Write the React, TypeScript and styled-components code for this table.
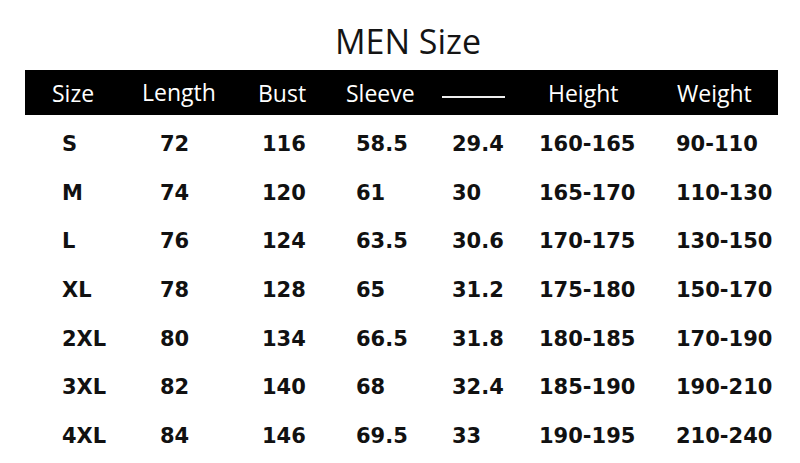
import React from "react";
import styled, { createGlobalStyle } from "styled-components";

const Global = createGlobalStyle`
  html, body { margin: 0; padding: 0; background: #fff; }
  body { width: 800px; height: 463px; overflow: hidden; }
`;

const Page = styled.div`
  width: 800px;
  height: 463px;
  background: #fff;
  display: flex;
  flex-direction: column;
`;

const Title = styled.h1`
  margin: 0;
  padding-top: 24px;
  font-family: "Open Sans", "Noto Sans", sans-serif;
  font-weight: 400;
  font-size: 34px;
  line-height: 34px;
  color: #141414;
  text-align: center;
  padding-left: 16px;
`;

const HeaderBar = styled.div`
  margin: 12px 22px 0 25px;
  height: 45px;
  box-sizing: border-box;
  padding: 2px 0 0 27px;
  background: #000;
  display: grid;
  grid-template-columns: 90px 116px 88px 96px 106px 129px 1fr;
  align-items: center;
  font-family: "Open Sans", "Noto Sans", sans-serif;
  font-size: 23px;
  line-height: 43px;
  color: #fff;
`;

const HeadCell = styled.div<{ $lift?: number }>`
  white-space: nowrap;
  transform: translateY(${(p) => -(p.$lift ?? 0)}px);
`;

const Rule = styled.span`
  display: block;
  width: 63px;
  height: 2px;
  margin-top: 6px;
  background: #eee;
`;

const Body = styled.div`
  margin-top: 5px;
  padding-left: 62px;
  display: flex;
  flex-direction: column;
`;

const Row = styled.div`
  display: grid;
  grid-template-columns: 98px 102px 94px 96px 87px 137px 1fr;
  height: 48.67px;
  font-family: "DejaVu Sans", "Noto Sans", sans-serif;
  font-weight: 700;
  font-size: 21px;
  line-height: 48.67px;
  color: #111;
`;

const Cell = styled.div`
  white-space: nowrap;
`;

const rows = [
  ["S", "72", "116", "58.5", "29.4", "160-165", "90-110"],
  ["M", "74", "120", "61", "30", "165-170", "110-130"],
  ["L", "76", "124", "63.5", "30.6", "170-175", "130-150"],
  ["XL", "78", "128", "65", "31.2", "175-180", "150-170"],
  ["2XL", "80", "134", "66.5", "31.8", "180-185", "170-190"],
  ["3XL", "82", "140", "68", "32.4", "185-190", "190-210"],
  ["4XL", "84", "146", "69.5", "33", "190-195", "210-240"],
];

export default function App() {
  return (
    <Page>
      <Global />
      <Title>MEN Size</Title>
      <HeaderBar>
        <HeadCell>Size</HeadCell>
        <HeadCell $lift={1}>Length</HeadCell>
        <HeadCell>Bust</HeadCell>
        <HeadCell>Sleeve</HeadCell>
        <HeadCell>
          <Rule />
        </HeadCell>
        <HeadCell>Height</HeadCell>
        <HeadCell>Weight</HeadCell>
      </HeaderBar>
      <Body>
        {rows.map((r) => (
          <Row key={r[0]}>
            {r.map((c, i) => (
              <Cell key={i}>{c}</Cell>
            ))}
          </Row>
        ))}
      </Body>
    </Page>
  );
}
